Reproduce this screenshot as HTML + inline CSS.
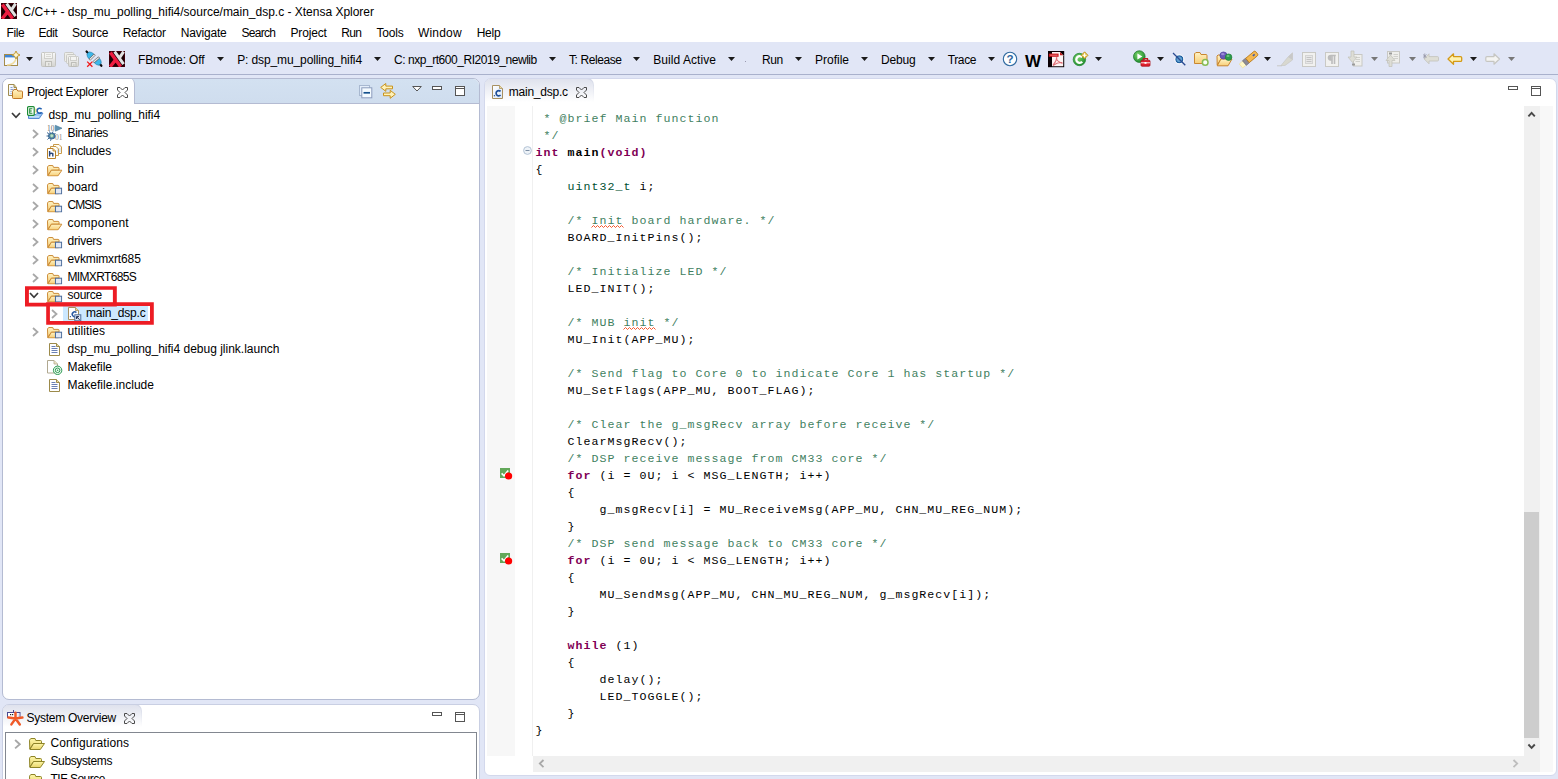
<!DOCTYPE html>
<html><head><meta charset="utf-8"><title>Xtensa Xplorer</title>
<style>
html,body{margin:0;padding:0}
body{width:1558px;height:779px;overflow:hidden;position:relative;background:#e1e6f6;font:12px/14px 'Liberation Sans', sans-serif;color:#000}
.a{position:absolute}
.t{position:absolute;white-space:pre;font:12px/14px 'Liberation Sans', sans-serif;color:#000}
#code{position:absolute;left:535.5px;top:110.3px;font:11.6px/17px 'Liberation Mono', monospace;letter-spacing:1.04px;color:#000}
.ln{height:17px;white-space:pre}
.c{color:#3f7f5f} .k{color:#7f0055;font-weight:bold} .b{font-weight:bold} .y{color:#005032}
svg{position:absolute;overflow:visible}
</style></head><body>
<!-- title + menu -->
<div class="a" style="left:0;top:0;width:1558px;height:42px;background:#fff"></div>
<!-- toolbar -->
<div class="a" style="left:0;top:42px;width:1558px;height:32px;background:#e1e6f6"></div>
<div class="a" style="left:0;top:74px;width:1558px;height:1px;background:#a9b1cc"></div>
<!-- project explorer panel -->
<div class="a" style="left:2px;top:78px;width:476px;height:620px;background:#fff;border:1px solid #b4bbd2;border-radius:7px;overflow:hidden">
  <div class="a" style="left:0;top:0;width:476px;height:24px;background:linear-gradient(#d3e1f1,#cfddee)"></div>
  <div class="a" style="left:-1px;top:-1px;width:132px;height:26px;background:#fff;border-radius:7px 6px 0 0;border-right:1px solid #b4bbd2"></div>
  <div class="a" style="left:132px;top:24px;width:345px;height:1px;background:#b4bbd2"></div>
</div>
<!-- system overview panel -->
<div class="a" style="left:2px;top:704px;width:476px;height:90px;background:#fff;border:1px solid #c9cfe3;border-radius:7px 7px 0 0;overflow:hidden">
  <div class="a" style="left:-1px;top:-1px;width:140px;height:25px;background:linear-gradient(#cfd4e4,#fff 92%);border-radius:7px 7px 0 0"><div class="a" style="left:1px;top:1px;right:1px;bottom:0;background:linear-gradient(#dfe2ed,#fff 92%);border-radius:6px 6px 0 0"></div></div>
  <div class="a" style="left:2px;top:27px;width:470px;height:70px;border:1px solid #828790"></div>
</div>
<!-- editor panel -->
<div class="a" style="left:484px;top:78px;width:1071px;height:696px;background:#fff;border:1px solid #d3d8ec;border-radius:7px 7px 6px 6px;overflow:hidden">
  <div class="a" style="left:-1px;top:-1px;width:110px;height:26px;background:linear-gradient(#cfd4e4,#fff 92%);border-radius:7px 7px 0 0"><div class="a" style="left:1px;top:1px;right:1px;bottom:0;background:linear-gradient(#dfe2ed,#fff 92%);border-radius:6px 6px 0 0"></div></div>
</div>
<!-- editor gutter -->
<div class="a" style="left:487px;top:106px;width:28px;height:650px;background:#f7f7f7"></div>
<div class="a" style="left:532px;top:106px;width:1px;height:650px;background:#f0f0f0"></div>
<!-- editor scrollbars -->
<div class="a" style="left:1524px;top:106px;width:16px;height:666px;background:#f0f0f0"></div>
<div class="a" style="left:1540px;top:106px;width:13px;height:666px;background:#f8f8f8"></div>
<div class="a" style="left:1524px;top:512px;width:15px;height:226px;background:#cdcdcd"></div>
<div class="a" style="left:533px;top:756px;width:1007px;height:16px;background:#f0f0f0"></div>
<!-- selection + red boxes -->
<div class="a" style="left:63px;top:305px;width:85px;height:17px;background:#cce8ff"></div>
<svg width="0" height="0" style="position:absolute"><defs>
<linearGradient id="gf" x1="0" y1="0" x2="0" y2="1"><stop offset="0" stop-color="#fff3c4"/><stop offset="1" stop-color="#f7cf78"/></linearGradient>
<linearGradient id="gy" x1="0" y1="0" x2="0" y2="1"><stop offset="0" stop-color="#fdf6a8"/><stop offset="1" stop-color="#e9d56a"/></linearGradient>
<linearGradient id="gp" x1="0" y1="0" x2="1" y2="1"><stop offset="0" stop-color="#ffffff"/><stop offset="1" stop-color="#dce8f8"/></linearGradient>
<linearGradient id="gg" x1="0" y1="0" x2="0" y2="1"><stop offset="0" stop-color="#fafafa"/><stop offset="1" stop-color="#d4d4d0"/></linearGradient>
<radialGradient id="gr" cx="0.4" cy="0.35" r="0.7"><stop offset="0" stop-color="#7ad36a"/><stop offset="1" stop-color="#1c8a2c"/></radialGradient>
<symbol id="xlogo" viewBox="0 0 16 16"><rect width="16" height="16" fill="#1c0003"/><rect x="0" y="0" width="16" height="16" fill="none" stroke="#5a0010" stroke-width="1"/>
 <path d="M1.4 1.6 L11.6 15.6 M1.2 15.6 L6 9.6" stroke="#ee1c40" stroke-width="3.4" fill="none"/>
 <path d="M5.6 .6 L14.6 13.2 M14.6 .6 L10.6 6.6" stroke="#e2e2e2" stroke-width="3" fill="none"/></symbol>
<symbol id="dd" viewBox="0 0 7 4"><path d="M0 0H7L3.5 4Z"/></symbol>
<symbol id="chev" viewBox="0 0 7 10"><path d="M1 1 L5.5 5 L1 9" fill="none" stroke="#a8a8a8" stroke-width="1.8"/></symbol>
<symbol id="chevd" viewBox="0 0 10 7"><path d="M1 1 L5 5.3 L9 1" fill="none" stroke="#3a3a3a" stroke-width="1.7"/></symbol>
<symbol id="closex" viewBox="0 0 11 11"><path d="M.5 .5H3L5.5 3L8 .5H10.5V3L8 5.5L10.5 8V10.5H8L5.5 8L3 10.5H.5V8L3 5.5L.5 3Z" fill="none" stroke="#4a4a4a" stroke-width="1"/></symbol>
<symbol id="minb" viewBox="0 0 11 5"><rect x=".5" y=".5" width="9" height="3" fill="#fff" stroke="#555" stroke-width="1"/></symbol>
<symbol id="maxb" viewBox="0 0 11 11"><rect x=".5" y=".5" width="9" height="9" fill="#fff" stroke="#555" stroke-width="1"/><path d="M.5 2.5H9.5" stroke="#555" stroke-width="1"/></symbol>
<symbol id="fopen" viewBox="0 0 16 12" preserveAspectRatio="none"><path d="M.5 2.2 Q.5 1.5 1.2 1.5 L1.8 .5 H6 L6.8 2.5 H11.5 Q12.5 2.5 12.5 3.5 V5.5 H4.5 L.8 11 Z" fill="url(#gf)" stroke="#c98730" stroke-width="1" stroke-linejoin="round"/>
 <path d="M4.6 5.5 H15.5 L11.3 11.5 H.9 Z" fill="url(#gf)" stroke="#c98730" stroke-width="1" stroke-linejoin="round"/></symbol>
<symbol id="fopeny" viewBox="0 0 16 12"><path d="M.5 2.2 Q.5 1.5 1.2 1.5 L1.8 .5 H6 L6.8 2.5 H11.5 Q12.5 2.5 12.5 3.5 V5.5 H4.5 L.8 11 Z" fill="url(#gy)" stroke="#8e8428" stroke-width="1" stroke-linejoin="round"/>
 <path d="M4.6 5.5 H15.5 L11.3 11.5 H.9 Z" fill="url(#gy)" stroke="#8e8428" stroke-width="1" stroke-linejoin="round"/></symbol>
<symbol id="flink" viewBox="0 0 16 12" preserveAspectRatio="none"><path d="M.5 2.2 Q.5 1.5 1.2 1.5 L1.8 .5 H6 L6.8 2.5 H11.5 Q12.5 2.5 12.5 3.5 V5.5 H4.5 L.8 11 Z" fill="url(#gf)" stroke="#c98730" stroke-width="1" stroke-linejoin="round"/>
 <path d="M4.6 5.5 H12 V11.5 H.9 Z" fill="url(#gf)" stroke="#c98730" stroke-width="1" stroke-linejoin="round"/>
 <rect x="8.8" y="5.5" width="6.4" height="6" fill="#e2e8f4" stroke="#4d6e9c" stroke-width="1.1"/></symbol>
<symbol id="tfile" viewBox="0 0 12 13"><path d="M.5 .5 H7.5 L10.5 3.5 V12.5 H.5 Z" fill="#fff" stroke="#9c8a4a"/><path d="M7.5 .5 V3.5 H10.5" fill="#e8d9a0" stroke="#9c8a4a"/>
 <path d="M2.5 3.5H6.5 M2.5 5.5H8.5 M2.5 7.5H8.5 M2.5 9.5H8.5" stroke="#6a80b4" stroke-width="1"/></symbol>
</defs></svg>
<svg style="left:1px;top:3px" width="16" height="16"><use href="#xlogo" width="16" height="16"/></svg>
<svg style="left:109px;top:51px" width="16" height="16"><use href="#xlogo" width="16" height="16"/></svg>
<svg style="left:26px;top:57px" width="7" height="4" fill="#1a1a1a"><use href="#dd" width="7" height="4"/></svg>
<svg style="left:217px;top:57px" width="7" height="4" fill="#1a1a1a"><use href="#dd" width="7" height="4"/></svg>
<svg style="left:374px;top:57px" width="7" height="4" fill="#1a1a1a"><use href="#dd" width="7" height="4"/></svg>
<svg style="left:549px;top:57px" width="7" height="4" fill="#1a1a1a"><use href="#dd" width="7" height="4"/></svg>
<svg style="left:633px;top:57px" width="7" height="4" fill="#1a1a1a"><use href="#dd" width="7" height="4"/></svg>
<svg style="left:728px;top:57px" width="7" height="4" fill="#1a1a1a"><use href="#dd" width="7" height="4"/></svg>
<svg style="left:795px;top:57px" width="7" height="4" fill="#1a1a1a"><use href="#dd" width="7" height="4"/></svg>
<svg style="left:861px;top:57px" width="7" height="4" fill="#1a1a1a"><use href="#dd" width="7" height="4"/></svg>
<svg style="left:928px;top:57px" width="7" height="4" fill="#1a1a1a"><use href="#dd" width="7" height="4"/></svg>
<svg style="left:988px;top:57px" width="7" height="4" fill="#1a1a1a"><use href="#dd" width="7" height="4"/></svg>
<svg style="left:1095px;top:57px" width="7" height="4" fill="#1a1a1a"><use href="#dd" width="7" height="4"/></svg>
<svg style="left:1157px;top:57px" width="7" height="4" fill="#1a1a1a"><use href="#dd" width="7" height="4"/></svg>
<svg style="left:1264px;top:57px" width="7" height="4" fill="#1a1a1a"><use href="#dd" width="7" height="4"/></svg>
<svg style="left:1470px;top:57px" width="7" height="4" fill="#1a1a1a"><use href="#dd" width="7" height="4"/></svg>
<svg style="left:1371px;top:57px" width="7" height="4" fill="#777"><use href="#dd" width="7" height="4"/></svg>
<svg style="left:1409px;top:57px" width="7" height="4" fill="#777"><use href="#dd" width="7" height="4"/></svg>
<svg style="left:1508px;top:57px" width="7" height="4" fill="#777"><use href="#dd" width="7" height="4"/></svg>
<svg style="left:4px;top:51px" width="16" height="16" viewBox="0 0 16 16" ><rect x=".5" y="3.5" width="13" height="11" fill="#f4f9ff" stroke="#a58c4a"/><rect x="1" y="4" width="12" height="2.4" fill="#3f86d8"/>
<path d="M3 14 Q10 14 12 8" stroke="#f0dca0" stroke-width="1.6" fill="none"/>
<path d="M12 0 L13.3 2.7 L16 4 L13.3 5.3 L12 8 L10.7 5.3 L8 4 L10.7 2.7Z" fill="#fff6d0" stroke="#c29a34" stroke-width="1"/></svg>
<svg style="left:41px;top:52px" width="16" height="16" viewBox="0 0 16 16" ><path d="M.5 1.5 Q.5 .5 1.5 .5 H13.5 Q14.5 .5 14.5 1.5 V13.5 Q14.5 14.5 13.5 14.5 H1.5 Q.5 14.5 .5 13.5Z" fill="url(#gg)" stroke="#c4c4c0"/>
<rect x="3.5" y=".5" width="8" height="6" fill="#f4f4f2" stroke="#cfcfcb"/><path d="M5 2.5H10 M5 4.5H10" stroke="#d8d8d4"/>
<rect x="4.5" y="9.5" width="6" height="5" fill="#e8e8e4" stroke="#bdbdb8"/><rect x="7" y="11" width="1.5" height="2.5" fill="#c8c8c4"/></svg>
<svg style="left:64px;top:52px" width="16" height="16" viewBox="0 0 16 16" ><rect x=".5" y=".5" width="9" height="9" rx="1" fill="#eeeeea" stroke="#cacac6"/><rect x="2.5" y="2.5" width="9" height="9" rx="1" fill="#eeeeea" stroke="#cacac6"/>
<path d="M4.5 5.5 Q4.5 4.5 5.5 4.5 H13.5 Q14.5 4.5 14.5 5.5 V13.5 Q14.5 14.5 13.5 14.5 H5.5 Q4.5 14.5 4.5 13.5Z" fill="url(#gg)" stroke="#c4c4c0"/>
<rect x="6.5" y="4.5" width="6" height="4" fill="#f4f4f2" stroke="#cfcfcb"/><rect x="7.5" y="10.5" width="4.5" height="4" fill="#e8e8e4" stroke="#bdbdb8"/><rect x="9.3" y="12" width="1.2" height="2" fill="#c8c8c4"/></svg>
<svg style="left:86px;top:51px" width="17" height="17" viewBox="0 0 17 17" ><g transform="translate(4.5 4.5) rotate(-45)"><path d="M0 -5.6 V-3.6" stroke="#111" stroke-width="2.2" stroke-linecap="round"/><path d="M-1.5 -3.6 H1.5 Q3.4 -1.8 3.4 1.4 H-3.4 Q-3.4 -1.8 -1.5 -3.6Z" fill="#3db8ea" stroke="#1a78a8" stroke-width=".6"/><rect x="-3.6" y="1.4" width="7.2" height="1.8" fill="#e4e4e4" stroke="#555" stroke-width=".6"/></g><g transform="translate(11.75 10.55) rotate(139.5)"><path d="M0 -5.6 V-3.6" stroke="#111" stroke-width="2.2" stroke-linecap="round"/><path d="M-1.5 -3.6 H1.5 Q3.4 -1.8 3.4 1.4 H-3.4 Q-3.4 -1.8 -1.5 -3.6Z" fill="#3db8ea" stroke="#1a78a8" stroke-width=".6"/><rect x="-3.6" y="1.4" width="7.2" height="1.8" fill="#e4e4e4" stroke="#555" stroke-width=".6"/></g>
<path d="M1.2 10.6 L6.4 15.8 M6.4 10.6 L1.2 15.8" stroke="#f01818" stroke-width="1.3"/></svg>
<svg style="left:745px;top:61px" width="2" height="2" viewBox="0 0 2 2" ><rect width="1" height="1" fill="#9a9ab0"/></svg>
<svg style="left:1002px;top:52px" width="16" height="16" viewBox="0 0 16 16" ><circle cx="8" cy="7" r="6.7" fill="#fdfeff" stroke="#2f6aa0" stroke-width="1.1"/><text x="8" y="11.2" text-anchor="middle" font-family="Liberation Sans" font-weight="bold" font-size="11.5" fill="#2a64a0">?</text></svg>
<svg style="left:1024px;top:52px" width="18" height="16" viewBox="0 0 18 16" ><text x="9" y="14.6" text-anchor="middle" font-family="Liberation Sans" font-weight="bold" font-size="15.6" fill="#000" textLength="16" lengthAdjust="spacingAndGlyphs">W</text></svg>
<svg style="left:1048px;top:51px" width="17" height="17" viewBox="0 0 17 17" ><rect x="0" y="0" width="16.2" height="16.2" fill="#0a0004"/><path d="M4 1 H12 L15.2 4.2 V15.2 H4Z" fill="#fdf4f4"/><path d="M12 1 V4.2 H15.2Z" fill="#c01818"/>
<path d="M.8 2.6 H10.6 V5.8 H.8Z" fill="#c8141c"/><path d="M2 4.2 H9.5" stroke="#e87878" stroke-width="1"/>
<path d="M5.2 13.8 Q8.2 10.4 8.8 7.2 Q9 6 8.3 7 Q8.6 10 13.4 12 Q14.8 12.6 13.8 11.6 Q10 10.8 5.4 14.2Z" fill="none" stroke="#e07078" stroke-width="1.1"/></svg>
<svg style="left:1073px;top:51px" width="16" height="16" viewBox="0 0 16 16" ><circle cx="6.4" cy="8.5" r="6.2" fill="url(#gr)" stroke="#2a8a3a" stroke-width=".8"/><path d="M9.2 6.2 A3.4 3.4 0 1 0 9.2 10.8" fill="none" stroke="#fff" stroke-width="2.3"/>
<path d="M11.6 .8 L15 4.3 L11.6 7.8 L8.2 4.3Z" fill="#e8c040" stroke="#b88a18" stroke-width=".8"/><path d="M11.6 2.3 V6.3 M9.6 4.3 H13.6" stroke="#fff" stroke-width="1.1"/></svg>
<svg style="left:1133px;top:50px" width="18" height="17" viewBox="0 0 18 17" ><circle cx="6.3" cy="6.6" r="5.8" fill="url(#gr)" stroke="#1d7a2a" stroke-width=".8"/><path d="M4.4 3.6 L9.4 6.6 L4.4 9.6Z" fill="#fff"/>
<rect x="8" y="10.2" width="9" height="6" rx="1" fill="#e0202c" stroke="#a80f18" stroke-width=".8"/><path d="M10.5 10 V8.6 H14.5 V10" fill="none" stroke="#c01822" stroke-width="1.2"/><path d="M8 12.8 H17" stroke="#fff" stroke-width=".9"/><rect x="11.5" y="12" width="2" height="1.8" fill="#fff"/></svg>
<svg style="left:1172px;top:52px" width="14" height="14" viewBox="0 0 14 14" ><circle cx="7.3" cy="7.3" r="3.4" fill="#5f9fcf" stroke="#1f5f9f" stroke-width="1.2"/><circle cx="7.3" cy="7.3" r="4.6" fill="none" stroke="#fff" stroke-width="1" opacity=".8"/><path d="M1 1 L13.3 13.3" stroke="#2a4a90" stroke-width="1.3"/></svg>
<svg style="left:1194px;top:52px" width="16" height="15" viewBox="0 0 16 15" ><path d="M.5 2 Q.5 1 1.5 1 L2 .5 H6 L7 2.5 H12 Q13 2.5 13 3.5 V11.5 H.5Z" fill="url(#gf)" stroke="#c98730" stroke-linejoin="round"/>
<circle cx="11.2" cy="10.4" r="2.8" fill="#f8fff4" stroke="#86bc54" stroke-width="1.5"/></svg>
<svg style="left:1216px;top:51px" width="18" height="16" viewBox="0 0 18 16" ><path d="M1 5 L2 4 H6 L7 6 H13 V8 H5 L1.2 14Z" fill="url(#gf)" stroke="#c98730" stroke-linejoin="round"/><path d="M5 8 H16 L12 14.8 H1.2Z" fill="url(#gf)" stroke="#c98730" stroke-linejoin="round"/>
<circle cx="7.5" cy="4.5" r="3.6" fill="#6a58b8" stroke="#47389a" stroke-width=".6"/><circle cx="12.6" cy="6.2" r="3.3" fill="#2c9a4a" stroke="#1c7a36" stroke-width=".6"/><ellipse cx="6.8" cy="3.2" rx="1.8" ry="1.1" fill="#a79be0" opacity=".8"/><ellipse cx="12" cy="5" rx="1.6" ry="1" fill="#7ed090" opacity=".8"/></svg>
<svg style="left:1240px;top:51px" width="18" height="16" viewBox="0 0 18 16" ><g transform="translate(9 8.2) rotate(-40)"><path d="M-10.5 -2.6 H-5.5 V2.6 H-10.5Z" fill="#fff8c8" stroke="#ecd880" stroke-width=".5"/><path d="M-6 -3 H-2 V3 H-6Z" fill="#8c8a94" stroke="#66646e" stroke-width=".6"/><path d="M-2 -2.8 H8.6 Q10 -2.8 10 -1.4 V1.4 Q10 2.8 8.6 2.8 H-2Z" fill="#f4b850" stroke="#b87818" stroke-width=".8"/><rect x="5" y="-.8" width="2.4" height="1.6" fill="#3a5ab0"/></g></svg>
<svg style="left:1277px;top:52px" width="17" height="15" viewBox="0 0 17 15" ><path d="M0 13.8 H5" stroke="#c8c8c8" stroke-width="1"/><path d="M4 13.5 L11 5 L15.5 .8 V8 L8 13.5Z" fill="#d8d8d0" stroke="#c4c4c0" stroke-width=".6"/><path d="M11 5 L15.5 .8 V8Z" fill="#c8c8c8"/></svg>
<svg style="left:1302px;top:52px" width="14" height="15" viewBox="0 0 14 15" ><rect x=".5" y=".5" width="13" height="14" fill="#f1f1ef" stroke="#c9c9c5"/><rect x="3.5" y="3.5" width="7" height="8" fill="#e8e8e8" stroke="#bcbcbc" stroke-dasharray="1 1"/><path d="M4.5 5.5H9.5M4.5 7.5H9.5M4.5 9.5H9.5" stroke="#c4c4c4"/></svg>
<svg style="left:1325px;top:52px" width="14" height="15" viewBox="0 0 14 15" ><rect x=".5" y=".5" width="13" height="14" fill="#f1f1ef" stroke="#c9c9c5"/><path d="M9.5 3 V12 M7 3 V12 M10.8 3.5 H6 Q3.5 3.5 3.5 5.7 Q3.5 8 6.5 8" fill="none" stroke="#bcbcbc" stroke-width="1.6"/><path d="M6.5 3.5 Q3.5 3.5 3.5 5.7 Q3.5 8 6.5 8Z" fill="#bcbcbc"/></svg>
<svg style="left:1348px;top:51px" width="15" height="16" viewBox="0 0 15 16" ><rect x="5.5" y="3.5" width="8.5" height="11.5" fill="#efefec" stroke="#c8c8c4"/><path d="M7.5 6.5H12M7.5 8.5H12M7.5 10.5H12" stroke="#d0d0cc"/><rect x="4" y="12.5" width="3" height="2" fill="#999"/>
<path d="M3 0 H6 V6 H9 L4.5 11.5 L0 6 H3Z" fill="#deded6" stroke="#c0c0b8" stroke-width=".7"/></svg>
<svg style="left:1386px;top:51px" width="15" height="16" viewBox="0 0 15 16" ><rect x="1.5" y=".5" width="12" height="11.5" fill="#efefec" stroke="#c8c8c4"/><path d="M7.5 3.5H12M7.5 5.5H12M7.5 7.5H12" stroke="#d0d0cc"/><rect x="3" y="1.5" width="3" height="2" fill="#999"/>
<path d="M3 15.5 H6 V9.5 H9 L4.5 4 L0 9.5 H3Z" fill="#deded6" stroke="#c0c0b8" stroke-width=".7"/></svg>
<svg style="left:1423px;top:53px" width="16" height="12" viewBox="0 0 16 12" ><path d="M6 .8 L1 5.8 L6 10.8 V8 H14.5 Q15.5 8 15.5 7 V4.6 Q15.5 3.6 14.5 3.6 H6Z" fill="#deded6" stroke="#c2c2ba" stroke-width=".8"/><path d="M0 1.5 L3.5 4.5 M3.5 1.5 L0 4.5 M1.75 .5 V5.5" stroke="#8a8a9a" stroke-width=".7"/></svg>
<svg style="left:1447px;top:53px" width="16" height="12" viewBox="0 0 16 12" ><path d="M6.5 .8 L1 6 L6.5 11.2 V8.4 H13.5 Q14.7 8.4 14.7 7.2 V4.8 Q14.7 3.6 13.5 3.6 H6.5Z" fill="#fff3b0" stroke="#d49a18" stroke-width="1.3" stroke-linejoin="round"/></svg>
<svg style="left:1485px;top:53px" width="16" height="12" viewBox="0 0 16 12" ><path d="M9 .8 L14.5 6 L9 11.2 V8.4 H2 Q.8 8.4 .8 7.2 V4.8 Q.8 3.6 2 3.6 H9Z" fill="#f4f4f2" stroke="#c6c6c2" stroke-width="1.2" stroke-linejoin="round"/></svg>
<svg style="left:8px;top:84px" width="16" height="16" viewBox="0 0 16 16" ><path d="M.5 .5 H6 L8.5 3.5 V11.5 H.5Z" fill="url(#gp)" stroke="#a08c50"/><path d="M6 .5 V3.5 H8.5" fill="#e0cf90" stroke="#a08c50"/><path d="M2.5 3.5H4.5M2.5 5.5H5.5M2.5 7.5H3.5M2.5 9.5H3.5" stroke="#8aa0d0"/>
<path d="M4.5 7.5 Q4.5 6.5 5.5 6.5 L6 5.5 H9 L9.8 7 H13.5 Q14.5 7 14.5 8 V13.5 Q14.5 14.5 13.5 14.5 H5.5 Q4.5 14.5 4.5 13.5Z" fill="url(#gf)" stroke="#c07828"/></svg>
<svg style="left:116.5px;top:86.5px" width="11" height="11"><use href="#closex" width="11" height="11"/></svg>
<svg style="left:359px;top:85px" width="14" height="14" viewBox="0 0 14 14" ><rect x=".5" y=".5" width="10" height="10" fill="#e4eefa" stroke="#a8b8d0"/><rect x="2.8" y="2.8" width="10" height="10" fill="#f4fbff" stroke="#8c9cbc"/><path d="M4.5 7.8 H11" stroke="#14508c" stroke-width="1.7"/></svg>
<svg style="left:380px;top:83px" width="17" height="16" viewBox="0 0 17 16" ><path d="M5.8 .5 L.7 4.4 L5.8 8.3 V5.8 H12.5 V3.1 H5.8Z" fill="#fff2b8" stroke="#c8921c" stroke-width="1" stroke-linejoin="round"/><path d="M10.2 7.3 L15.3 11.3 L10.2 15.3 V12.7 H3.5 V10 H10.2Z" fill="#fff2b8" stroke="#c8921c" stroke-width="1" stroke-linejoin="round"/></svg>
<svg style="left:412px;top:86px" width="11" height="6" viewBox="0 0 11 6" ><path d="M.7 .5 H9.3 L5 5Z" fill="#fff" stroke="#555" stroke-width="1"/></svg>
<svg style="left:432px;top:86px" width="11" height="5"><use href="#minb" width="11" height="5"/></svg>
<svg style="left:455px;top:86px" width="11" height="11"><use href="#maxb" width="11" height="11"/></svg>
<svg style="left:11px;top:112px" width="10" height="7"><use href="#chevd" width="10" height="7"/></svg>
<svg style="left:31.5px;top:128.5px" width="7" height="10"><use href="#chev" width="7" height="10"/></svg>
<svg style="left:31.5px;top:146.5px" width="7" height="10"><use href="#chev" width="7" height="10"/></svg>
<svg style="left:31.5px;top:164.5px" width="7" height="10"><use href="#chev" width="7" height="10"/></svg>
<svg style="left:31.5px;top:182.5px" width="7" height="10"><use href="#chev" width="7" height="10"/></svg>
<svg style="left:31.5px;top:200.5px" width="7" height="10"><use href="#chev" width="7" height="10"/></svg>
<svg style="left:31.5px;top:218.5px" width="7" height="10"><use href="#chev" width="7" height="10"/></svg>
<svg style="left:31.5px;top:236.5px" width="7" height="10"><use href="#chev" width="7" height="10"/></svg>
<svg style="left:31.5px;top:254.5px" width="7" height="10"><use href="#chev" width="7" height="10"/></svg>
<svg style="left:31.5px;top:272.5px" width="7" height="10"><use href="#chev" width="7" height="10"/></svg>
<svg style="left:31.5px;top:326.5px" width="7" height="10"><use href="#chev" width="7" height="10"/></svg>
<svg style="left:29px;top:292px" width="10" height="7"><use href="#chevd" width="10" height="7"/></svg>
<svg style="left:51px;top:308.5px" width="7" height="10"><use href="#chev" width="7" height="10"/></svg>
<svg style="left:27px;top:106px" width="17" height="14" viewBox="0 0 17 14" ><path d="M1.5 8.5 H9 L10.5 7 H16 L12.2 12.5 H1.5Z" fill="#9cc8f4" stroke="#4a80cc" stroke-width=".9" stroke-linejoin="round"/><path d="M2.5 10.8 L12 10.8" stroke="#d8eafc" stroke-width="1"/>
<rect x="7.4" y="2.6" width="3" height="4" fill="#f8e6a8"/>
<rect x=".6" y=".6" width="6.6" height="8.8" rx="1" fill="#fff" stroke="#1c8c34" stroke-width="1.2"/><path d="M2.7 2.4 V7.6 M2.2 2.8 H5.4 M2.2 5 H4.8 M2.2 7.2 H5.4" stroke="#1c8c34" stroke-width="1.1" fill="none"/>
<path d="M14.6 3.2 A2.5 2.5 0 1 0 14.6 6.2" fill="none" stroke="#1f5fb0" stroke-width="1.5"/></svg>
<svg style="left:46px;top:125px" width="17" height="16" viewBox="0 0 17 16" ><text x="1" y="5.6" font-family="Liberation Serif" font-size="7.5" fill="#6c6c6c">10</text><text x="9" y="14.6" font-family="Liberation Serif" font-size="7.5" fill="#8a8a8a">01</text>
<path d="M9.3 .3 L16 3.2 L9.3 6.2Z" fill="#5f94b4" stroke="#3f7494" stroke-width=".6"/>
<g stroke="#2a5a8a" stroke-width=".9" fill="none"><path d="M1 7.5 L3.5 9.5 M.5 11 H3 M1.5 14.5 L3.5 12.5 M7 6.5 L6.3 8.5 M9.5 8 L8 9.5 M4.5 15.8 L5.2 13.5 M3.5 6.5 L4.5 8.5"/></g>
<ellipse cx="5.8" cy="11" rx="3.4" ry="3" fill="#4f7ea8" stroke="#2a5a8a" stroke-width=".7"/><circle cx="5.8" cy="10.8" r="1.7" fill="#bfe0c8" stroke="#6aa87a" stroke-width=".5"/></svg>
<svg style="left:46px;top:143px" width="17" height="17" viewBox="0 0 17 17" ><path d="M7.5 1.5 H13 L15.5 4 V10.5 H7.5Z" fill="#fffdf4" stroke="#c99a4a"/><path d="M4.5 3.5 H10 L12.5 6 V12.5 H4.5Z" fill="#fffdf4" stroke="#c99a4a"/>
<path d="M1.5 5.5 H7 L9.5 8 V15.5 H1.5Z" fill="#fff" stroke="#b8822c"/><path d="M7 5.5 V8 H9.5" fill="#f0d8a0" stroke="#b8822c" stroke-width=".8"/>
<path d="M3.6 8 V13.6 M3.6 11 Q5.3 9.6 6.8 10.6 V13.6" fill="none" stroke="#27457a" stroke-width="1.4"/><path d="M11.5 6.5V10M14 5V9" stroke="#cfe0f4" stroke-width="1.2"/></svg>
<svg style="left:46.8px;top:164.8px" width="15.4" height="11.4"><use href="#fopen" width="15.4" height="11.4"/></svg>
<svg style="left:46.8px;top:218.8px" width="15.4" height="11.4"><use href="#fopen" width="15.4" height="11.4"/></svg>
<svg style="left:46.8px;top:182.8px" width="15.4" height="11.4"><use href="#flink" width="15.4" height="11.4"/></svg>
<svg style="left:46.8px;top:200.8px" width="15.4" height="11.4"><use href="#flink" width="15.4" height="11.4"/></svg>
<svg style="left:46.8px;top:236.8px" width="15.4" height="11.4"><use href="#flink" width="15.4" height="11.4"/></svg>
<svg style="left:46.8px;top:254.8px" width="15.4" height="11.4"><use href="#flink" width="15.4" height="11.4"/></svg>
<svg style="left:46.8px;top:272.8px" width="15.4" height="11.4"><use href="#flink" width="15.4" height="11.4"/></svg>
<svg style="left:46.8px;top:290.8px" width="15.4" height="11.4"><use href="#flink" width="15.4" height="11.4"/></svg>
<svg style="left:46.8px;top:326.8px" width="15.4" height="11.4"><use href="#flink" width="15.4" height="11.4"/></svg>
<svg style="left:68px;top:306.5px" width="14" height="15" viewBox="0 0 14 15" ><path d="M.5 .5 H7.5 L10.5 3.5 V12.5 H.5Z" fill="#fff" stroke="#a89060"/><path d="M7.5 .5 V3.5 H10.5" fill="#ecd9a0" stroke="#a89060" stroke-width=".8"/>
<rect x="1.8" y="9" width="1.2" height="1.2" fill="#4a6aa0"/><path d="M8.4 5.6 A2.4 2.4 0 1 0 8.4 9" fill="none" stroke="#2a5aa0" stroke-width="1.5"/>
<rect x="6.8" y="7.8" width="6" height="6" fill="#e2e8f4" stroke="#4d6e9c"/><path d="M8.6 9.6 V12 H8.6 M8.4 9.6 H11 M8.8 10 L11.6 12.8" stroke="#1a2a50" stroke-width="1" fill="none"/></svg>
<svg style="left:49px;top:343px" width="12" height="13"><use href="#tfile" width="12" height="13"/></svg>
<svg style="left:49px;top:379px" width="12" height="13"><use href="#tfile" width="12" height="13"/></svg>
<svg style="left:47px;top:360px" width="16" height="16" viewBox="0 0 16 16" ><path d="M.5 .5 H7 L10.5 4 V13 H.5Z" fill="#fff" stroke="#b0a890"/><path d="M7 .5 V4 H10.5" fill="#f0e4c0" stroke="#b0a890" stroke-width=".8"/>
<circle cx="10.6" cy="10.3" r="4.2" fill="#f0fbf0" stroke="#2c9a54" stroke-width="1"/><circle cx="10.6" cy="10.3" r="2.3" fill="none" stroke="#2c9a54" stroke-width="1"/><circle cx="10.6" cy="10.3" r=".8" fill="#2c9a54"/></svg>
<svg style="left:7px;top:708px" width="17" height="18" viewBox="0 0 17 18" ><rect x=".5" y="4.5" width="12.5" height="5" fill="#fff" stroke="#4a4a90" stroke-width="1"/><path d="M6.5 2 V4.5" stroke="#4a4a90"/><rect x="3" y="6" width="1.2" height="1.2" fill="#222"/><rect x="5" y="6" width="1.2" height="1.2" fill="#222"/><rect x="10.5" y="5.5" width="1.6" height="3.6" fill="#dfe4f4"/>
<path d="M8.5 4.8 V11 M8.5 10.4 L1.4 9.6 M8.5 10.4 L15.4 9.6 M8.5 10.6 L4.4 16.4 M8.5 10.6 L12.8 16.4" stroke="#f05a28" stroke-width="2.5" stroke-linecap="round"/></svg>
<svg style="left:123.5px;top:712.5px" width="11" height="11"><use href="#closex" width="11" height="11"/></svg>
<svg style="left:432px;top:712px" width="11" height="5"><use href="#minb" width="11" height="5"/></svg>
<svg style="left:455px;top:712px" width="11" height="11"><use href="#maxb" width="11" height="11"/></svg>
<svg style="left:14.4px;top:739px" width="7.4" height="10.4"><use href="#chev" width="7.4" height="10.4"/></svg>
<svg style="left:29px;top:738px" width="16" height="12"><use href="#fopeny" width="16" height="12"/></svg>
<svg style="left:29px;top:756px" width="16" height="12"><use href="#fopeny" width="16" height="12"/></svg>
<svg style="left:29px;top:774px" width="16" height="12"><use href="#fopeny" width="16" height="12"/></svg>
<svg style="left:492px;top:85px" width="12" height="14" viewBox="0 0 12 14" ><path d="M.5 .5 H7.5 L10.5 3.5 V13.5 H.5Z" fill="url(#gp)" stroke="#a89060"/><path d="M7.5 .5 V3.5 H10.5" fill="#ecd9a0" stroke="#a89060" stroke-width=".8"/>
<rect x="1.8" y="10" width="1.3" height="1.3" fill="#3a5a90"/><path d="M8.6 6.4 A2.6 2.6 0 1 0 8.6 10" fill="none" stroke="#1f4f98" stroke-width="1.7"/></svg>
<svg style="left:576px;top:86.5px" width="11" height="11"><use href="#closex" width="11" height="11"/></svg>
<svg style="left:1508px;top:86px" width="11" height="5"><use href="#minb" width="11" height="5"/></svg>
<svg style="left:1531px;top:86px" width="11" height="11"><use href="#maxb" width="11" height="11"/></svg>
<svg style="left:523px;top:146px" width="9" height="9" viewBox="0 0 9 9" ><circle cx="4.5" cy="4.5" r="3.9" fill="#eef3f8" stroke="#b4c4d6" stroke-width="1"/><path d="M2.5 4.5H6.5" stroke="#7c8ea4" stroke-width="1"/></svg>
<svg style="left:500px;top:468px" width="13" height="13" viewBox="0 0 13 13" ><rect x="0" y="0" width="10" height="10" fill="#63a85a"/><path d="M1.6 5.4 L4 7.8 L8.2 2.4" fill="none" stroke="#fff" stroke-width="1.6"/><circle cx="8.6" cy="8" r="3.6" fill="#ff0000"/></svg>
<svg style="left:500px;top:553px" width="13" height="13" viewBox="0 0 13 13" ><rect x="0" y="0" width="10" height="10" fill="#63a85a"/><path d="M1.6 5.4 L4 7.8 L8.2 2.4" fill="none" stroke="#fff" stroke-width="1.6"/><circle cx="8.6" cy="8" r="3.6" fill="#ff0000"/></svg>
<svg style="left:591px;top:225px" width="34" height="4" viewBox="0 0 34 4" ><polyline points="0.5,2.5 2.5,0.5 4.5,2.5 6.5,0.5 8.5,2.5 10.5,0.5 12.5,2.5 14.5,0.5 16.5,2.5 18.5,0.5 20.5,2.5 22.5,0.5 24.5,2.5 26.5,0.5 28.5,2.5 30.5,0.5 32.5,2.5" fill="none" stroke="#f5572c" stroke-width="1"/></svg>
<svg style="left:623px;top:327px" width="34" height="4" viewBox="0 0 34 4" ><polyline points="0.5,2.5 2.5,0.5 4.5,2.5 6.5,0.5 8.5,2.5 10.5,0.5 12.5,2.5 14.5,0.5 16.5,2.5 18.5,0.5 20.5,2.5 22.5,0.5 24.5,2.5 26.5,0.5 28.5,2.5 30.5,0.5 32.5,2.5" fill="none" stroke="#f5572c" stroke-width="1"/></svg>
<svg style="left:1527px;top:111px" width="10" height="7" viewBox="0 0 10 7" ><path d="M1.4 5.3 L4.6 1.9 L7.8 5.3" fill="none" stroke="#484848" stroke-width="1.9"/></svg>
<svg style="left:1527px;top:743px" width="10" height="7" viewBox="0 0 10 7" ><path d="M1.4 1.5 L4.6 4.9 L7.8 1.5" fill="none" stroke="#484848" stroke-width="1.9"/></svg>
<svg style="left:538px;top:759px" width="7" height="10" viewBox="0 0 7 10" ><path d="M5.5 1 L1.8 4.6 L5.5 8.2" fill="none" stroke="#a8a8a8" stroke-width="1.8"/></svg>
<svg style="left:1511.5px;top:759px" width="7" height="10" viewBox="0 0 7 10" ><path d="M1.5 1 L5.2 4.6 L1.5 8.2" fill="none" stroke="#bdbdbd" stroke-width="1.8"/></svg>
<svg style="left:0;top:0" width="200" height="340"><path fill="#ed1c24" fill-rule="evenodd" d="M25 286.3H116.8V306.5H25Z M28.9 289.7H112.9V302.8H28.9Z"/><path fill="#ed1c24" fill-rule="evenodd" d="M46.2 302.3H153.8V324.8H46.2Z M49.9 306H150V320.9H49.9Z"/></svg>
<span class="t" style="left:22.5px;top:4.6px;letter-spacing:-0.011px;">C/C++ - dsp_mu_polling_hifi4/source/main_dsp.c - Xtensa Xplorer</span><span class="t" style="left:6.5px;top:25.6px;letter-spacing:-0.411px;">File</span><span class="t" style="left:38.4px;top:25.6px;letter-spacing:-0.372px;">Edit</span><span class="t" style="left:72.0px;top:25.6px;letter-spacing:-0.339px;">Source</span><span class="t" style="left:122.7px;top:25.6px;letter-spacing:-0.295px;">Refactor</span><span class="t" style="left:180.7px;top:25.6px;letter-spacing:-0.184px;">Navigate</span><span class="t" style="left:241.5px;top:25.6px;letter-spacing:-0.722px;">Search</span><span class="t" style="left:290.5px;top:25.6px;letter-spacing:-0.151px;">Project</span><span class="t" style="left:341.3px;top:25.6px;letter-spacing:-0.639px;">Run</span><span class="t" style="left:376.5px;top:25.6px;letter-spacing:-0.163px;">Tools</span><span class="t" style="left:418.0px;top:25.6px;letter-spacing:0.185px;">Window</span><span class="t" style="left:476.7px;top:25.6px;letter-spacing:-0.272px;">Help</span><span class="t" style="left:138.0px;top:52.6px;letter-spacing:-0.119px;">FBmode: Off</span><span class="t" style="left:237.2px;top:52.6px;letter-spacing:-0.114px;">P: dsp_mu_polling_hifi4</span><span class="t" style="left:394.1px;top:52.6px;letter-spacing:-0.465px;">C: nxp_rt600_RI2019_newlib</span><span class="t" style="left:569.0px;top:52.6px;letter-spacing:-0.420px;">T: Release</span><span class="t" style="left:653.2px;top:52.6px;letter-spacing:0.063px;">Build Active</span><span class="t" style="left:762.0px;top:52.6px;letter-spacing:-0.439px;">Run</span><span class="t" style="left:815.1px;top:52.6px;letter-spacing:-0.017px;">Profile</span><span class="t" style="left:881.0px;top:52.6px;letter-spacing:-0.155px;">Debug</span><span class="t" style="left:947.8px;top:52.6px;letter-spacing:-0.407px;">Trace</span><span class="t" style="left:27.0px;top:84.6px;letter-spacing:-0.273px;">Project Explorer</span><span class="t" style="left:508.8px;top:84.6px;letter-spacing:-0.238px;">main_dsp.c</span><span class="t" style="left:26.5px;top:710.6px;letter-spacing:-0.257px;">System Overview</span><span class="t" style="left:48.5px;top:108.1px;letter-spacing:-0.062px;">dsp_mu_polling_hifi4</span><span class="t" style="left:67.5px;top:126.1px;letter-spacing:-0.357px;">Binaries</span><span class="t" style="left:67.5px;top:144.1px;letter-spacing:-0.150px;">Includes</span><span class="t" style="left:67.5px;top:162.1px;letter-spacing:0.161px;">bin</span><span class="t" style="left:67.5px;top:180.1px;letter-spacing:-0.041px;">board</span><span class="t" style="left:67.5px;top:198.1px;letter-spacing:-0.943px;">CMSIS</span><span class="t" style="left:67.5px;top:216.1px;letter-spacing:0.225px;">component</span><span class="t" style="left:67.5px;top:234.1px;letter-spacing:-0.231px;">drivers</span><span class="t" style="left:67.5px;top:252.1px;letter-spacing:-0.124px;">evkmimxrt685</span><span class="t" style="left:67.5px;top:270.1px;letter-spacing:-0.664px;">MIMXRT685S</span><span class="t" style="left:67.5px;top:288.1px;letter-spacing:-0.272px;">source</span><span class="t" style="left:86.0px;top:306.1px;letter-spacing:-0.178px;">main_dsp.c</span><span class="t" style="left:67.5px;top:324.1px;letter-spacing:0.090px;">utilities</span><span class="t" style="left:67.5px;top:342.1px;letter-spacing:-0.004px;">dsp_mu_polling_hifi4 debug jlink.launch</span><span class="t" style="left:67.5px;top:360.1px;letter-spacing:-0.023px;">Makefile</span><span class="t" style="left:67.5px;top:378.1px;letter-spacing:0.028px;">Makefile.include</span><span class="t" style="left:50.5px;top:736.1px;letter-spacing:0.079px;">Configurations</span><span class="t" style="left:50.5px;top:754.1px;letter-spacing:-0.386px;">Subsystems</span><span class="t" style="left:50.5px;top:772.1px;letter-spacing:-0.486px;">TIF Source</span>
<div id="code">
<div class="ln"><span class="c"> * @brief Main function</span></div><div class="ln"><span class="c"> */</span></div><div class="ln"><span class="k">int</span> <span class="b">main</span><span class="k">(void)</span></div><div class="ln">{</div><div class="ln">    <span class="y">uint32_t</span> i;</div><div class="ln"></div><div class="ln"><span class="c">    /* </span><span class="c">Init</span><span class="c"> board hardware. */</span></div><div class="ln">    BOARD_InitPins();</div><div class="ln"></div><div class="ln"><span class="c">    /* Initialize LED */</span></div><div class="ln">    LED_INIT();</div><div class="ln"></div><div class="ln"><span class="c">    /* MUB </span><span class="c">init</span><span class="c"> */</span></div><div class="ln">    MU_Init(APP_MU);</div><div class="ln"></div><div class="ln"><span class="c">    /* Send flag to Core 0 to indicate Core 1 has startup */</span></div><div class="ln">    MU_SetFlags(APP_MU, BOOT_FLAG);</div><div class="ln"></div><div class="ln"><span class="c">    /* Clear the g_msgRecv array before receive */</span></div><div class="ln">    ClearMsgRecv();</div><div class="ln"><span class="c">    /* DSP receive message from CM33 core */</span></div><div class="ln">    <span class="k">for</span> (i = 0U; i &lt; MSG_LENGTH; i++)</div><div class="ln">    {</div><div class="ln">        g_msgRecv[i] = MU_ReceiveMsg(APP_MU, CHN_MU_REG_NUM);</div><div class="ln">    }</div><div class="ln"><span class="c">    /* DSP send message back to CM33 core */</span></div><div class="ln">    <span class="k">for</span> (i = 0U; i &lt; MSG_LENGTH; i++)</div><div class="ln">    {</div><div class="ln">        MU_SendMsg(APP_MU, CHN_MU_REG_NUM, g_msgRecv[i]);</div><div class="ln">    }</div><div class="ln"></div><div class="ln">    <span class="k">while</span> (1)</div><div class="ln">    {</div><div class="ln">        delay();</div><div class="ln">        LED_TOGGLE();</div><div class="ln">    }</div><div class="ln">}</div>
</div>
</body></html>
